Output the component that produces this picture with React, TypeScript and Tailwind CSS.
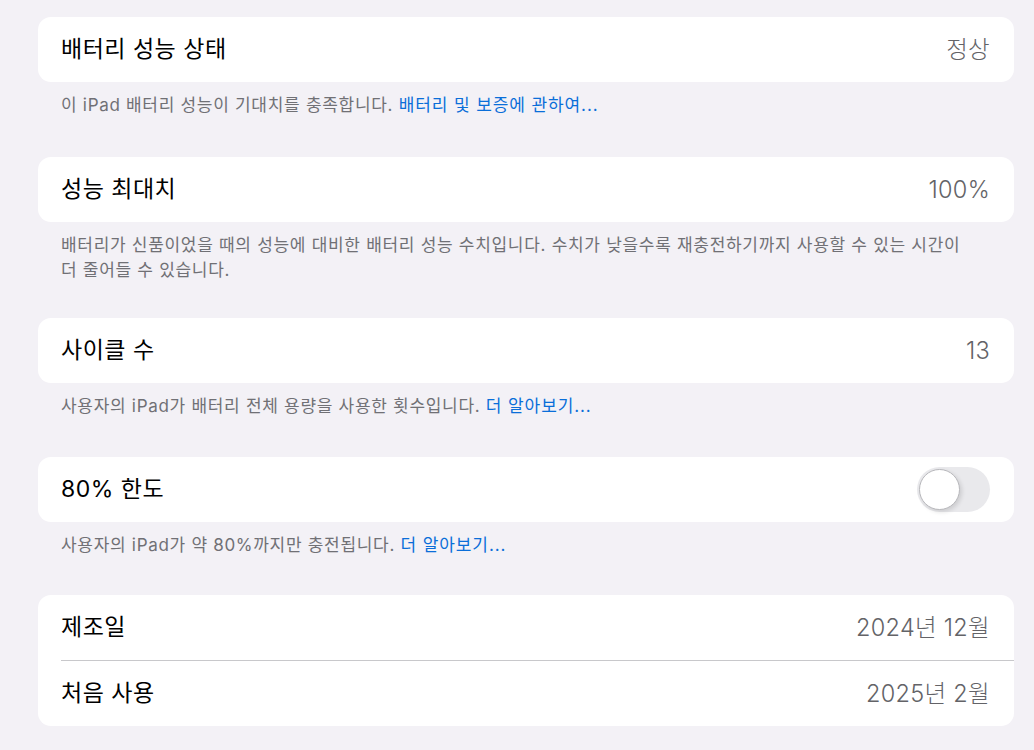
import React from 'react';

const font = { fontFamily: 'Inter, "Noto Sans CJK KR", "Noto Sans", sans-serif' };

function Row({ label, value, children }: { label: string; value?: string; children?: React.ReactNode }) {
    return (
        <div className="h-[65px] flex items-center justify-between pr-[24px]">
            <span className="text-[23px] text-black tracking-[0.5px]">{label}</span>
            {value && <span className="text-[23.5px] text-[#636367] font-light tracking-[0.3px]">{value}</span>}
            {children}
        </div>
    );
}

function Footer({ children, className = '' }: { children: React.ReactNode; className?: string }) {
    return (
        <p className={`pl-[23px] pr-[30px] pt-[11px] text-[17px] leading-[25px] tracking-[0.7px] text-[#707075] ${className}`}>
            {children}
        </p>
    );
}

function Link({ children }: { children: React.ReactNode }) {
    return <span className="text-[#0a6ed9] tracking-[0.9px]">{children}</span>;
}

export default function App() {
    return (
        <div style={font} className="w-[1034px] h-[750px] bg-[#f3f1f6] pl-[38px] pr-[20px] pt-[17px] overflow-hidden">
            {/* Battery health */}
            <div className="bg-white rounded-[13px] pl-[23px]">
                <Row label="배터리 성능 상태" value="정상" />
            </div>
            <Footer className="mb-[39px]">
                이 iPad 배터리 성능이 기대치를 충족합니다. <Link>배터리 및 보증에 관하여...</Link>
            </Footer>

            {/* Max capacity */}
            <div className="bg-white rounded-[13px] pl-[23px]">
                <Row label="성능 최대치" value="100%" />
            </div>
            <Footer className="mb-[35px]">
                배터리가 신품이었을 때의 성능에 대비한 배터리 성능 수치입니다. 수치가 낮을수록 재충전하기까지 사용할 수 있는 시간이
                <br />
                더 줄어들 수 있습니다.
            </Footer>

            {/* Cycle count */}
            <div className="bg-white rounded-[13px] pl-[23px]">
                <Row label="사이클 수" value="13" />
            </div>
            <Footer className="mb-[38px]">
                사용자의 iPad가 배터리 전체 용량을 사용한 횟수입니다. <Link>더 알아보기...</Link>
            </Footer>

            {/* 80% limit */}
            <div className="bg-white rounded-[13px] pl-[23px]">
                <Row label="80% 한도">
                    <div className="w-[73px] h-[45px] rounded-full bg-[#e9e9ec] p-[2px] flex items-center">
                        <div className="w-[41px] h-[41px] rounded-full bg-white border border-[#b8b8bc] shadow-[2px_2px_4px_rgba(0,0,0,0.12)]" />
                    </div>
                </Row>
            </div>
            <Footer className="mb-[37px]">
                사용자의 iPad가 약 80%까지만 충전됩니다. <Link>더 알아보기...</Link>
            </Footer>

            {/* Dates */}
            <div className="bg-white rounded-[13px] pl-[23px]">
                <Row label="제조일" value="2024년 12월" />
                <div className="h-px bg-[#c8c8cb]" />
                <Row label="처음 사용" value="2025년 2월" />
            </div>
        </div>
    );
}
